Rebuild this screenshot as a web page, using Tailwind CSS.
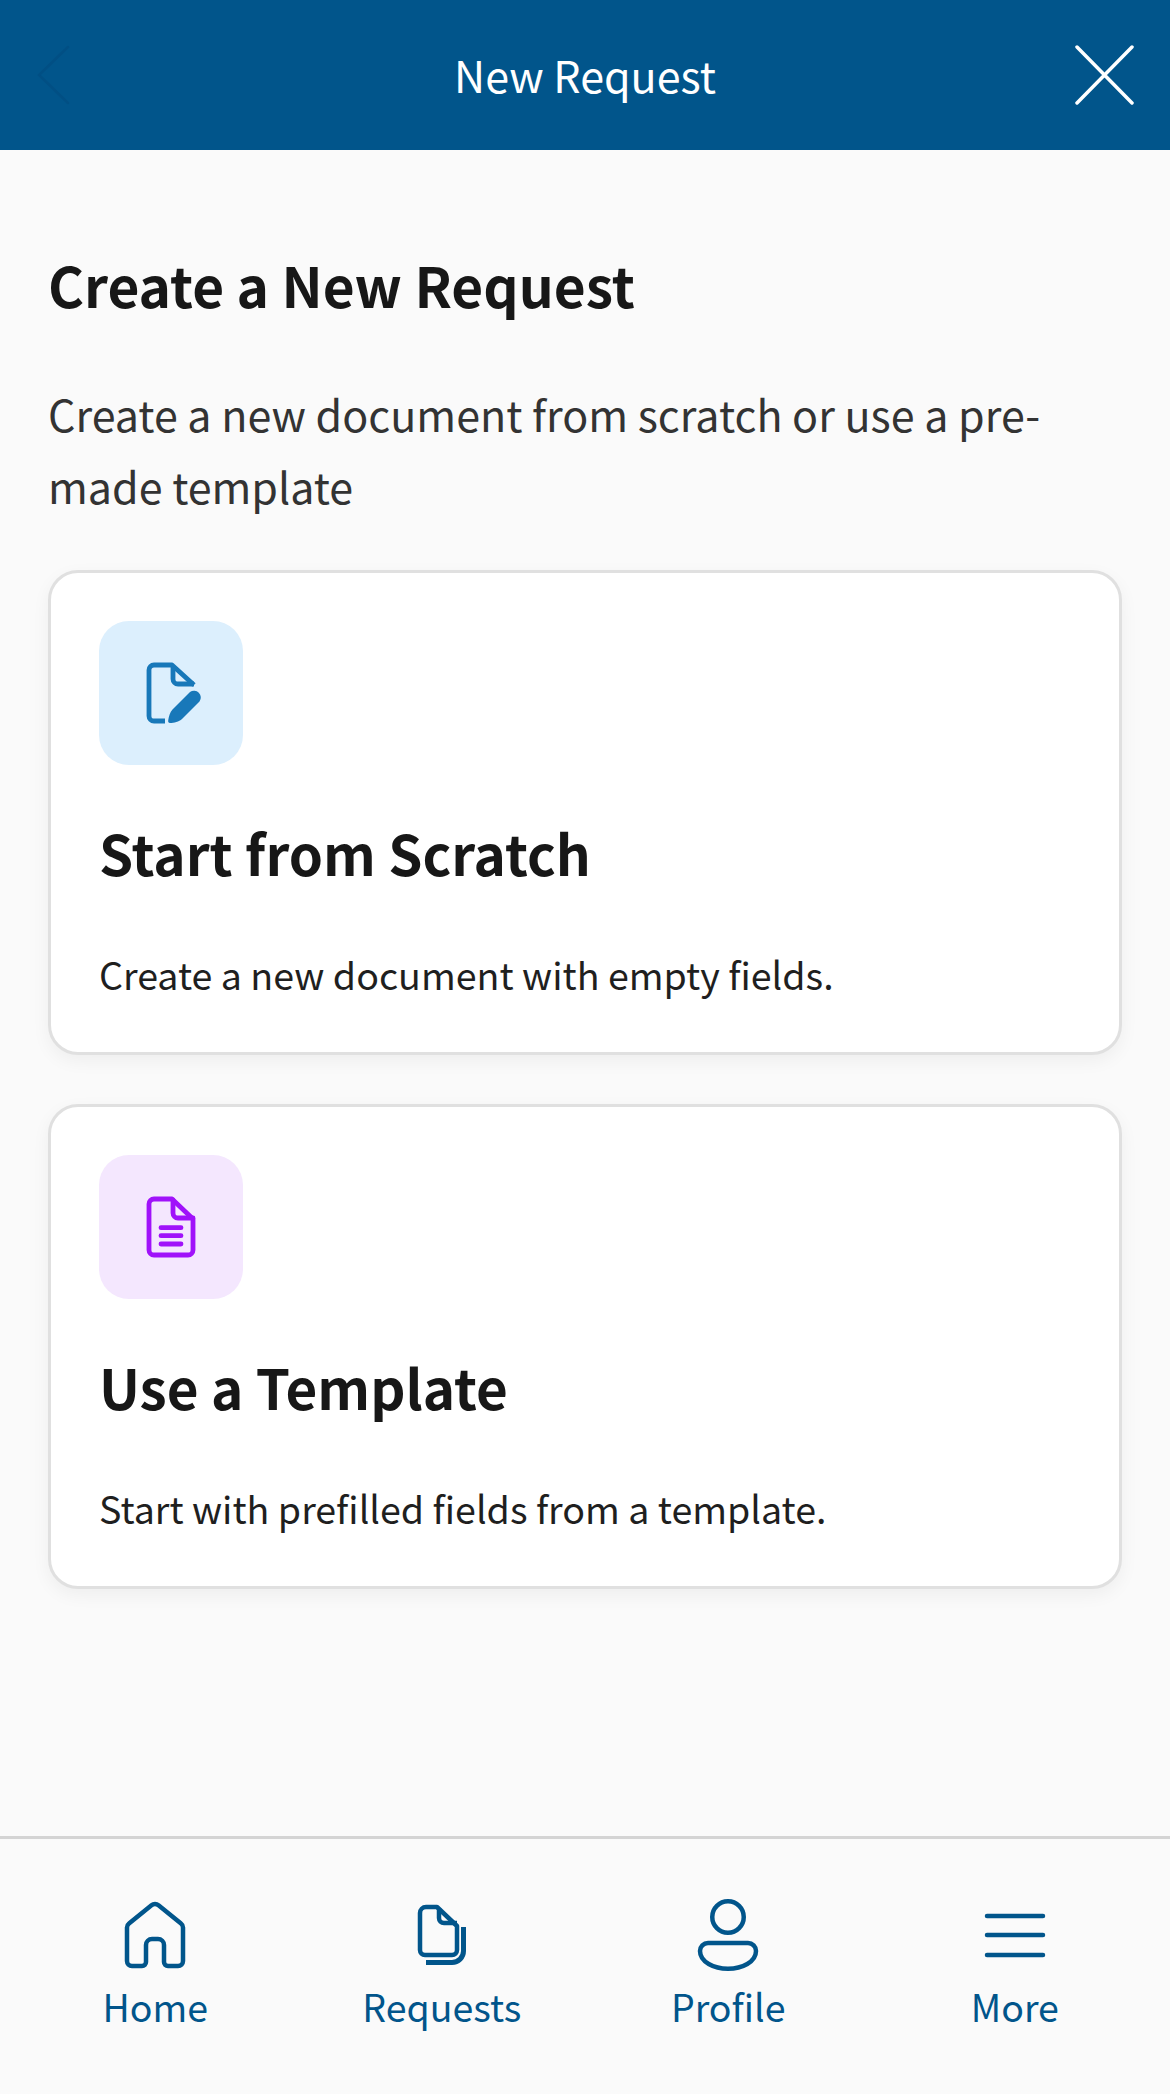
<!DOCTYPE html>
<html lang="en">
<head>
    <meta charset="UTF-8">
    <meta name="viewport" content="width=device-width, initial-scale=1.0">
    <title>New Request</title>
    <script src="https://cdn.jsdelivr.net/npm/@tailwindcss/browser@4"></script>
</head>
<body class="bg-[#fafafa] font-['Noto_Sans_CJK_SC','Noto_Sans',sans-serif]">
    <div class="w-[1170px] h-[2094px] flex flex-col overflow-hidden">
        <!-- header -->
        <header class="h-[150px] bg-[#01558b] flex items-center justify-between px-[36px] shrink-0">
            <svg class="w-[59px] h-[60px]" viewBox="0 0 59 60" fill="none" stroke="#014f84" stroke-width="2.5" stroke-linecap="round"><path d="M32 2 3 30l29 28"/></svg>
            <span class="text-white text-[43px] leading-[60px] mb-[2px]">New Request</span>
            <svg class="w-[59px] h-[60px]" viewBox="0 0 59 60" fill="none" stroke="#fff" stroke-width="3.5" stroke-linecap="round"><path d="M2 2l55 56M57 2 2 58"/></svg>
        </header>

        <main class="flex-1 px-[48px] pt-[98px]">
            <h1 class="text-[55px] leading-[72px] font-semibold text-[#171717]">Create a New Request</h1>
            <p class="mt-[57px] text-[43px] leading-[72px] text-[#333333]">Create a new document from scratch or use a pre-<br>made template</p>

            <div class="mt-[49px] flex flex-col gap-[49px]">
                <div class="h-[485px] bg-white border-[3px] border-[#e0e0e0] rounded-[30px] shadow-[0_6px_18px_rgba(0,0,0,0.05)] px-[48px] pt-[48px]">
                    <div class="w-[144px] h-[144px] rounded-[30px] bg-[#dceffd] flex items-center justify-center">
                        <svg class="w-[72px] h-[72px]" viewBox="0 0 72 72" fill="none" stroke="#1878b9" stroke-width="4.8" stroke-linejoin="round"><path d="M30 64H19a5 5 0 0 1-5-5V13a5 5 0 0 1 5-5H37L59 28"/><path d="M38 9V22a5 5 0 0 0 5 5H59"/><path d="M35 66C33.5 66 33 65 33.2 63.5C33.8 59.5 35 55 37.5 52.5L55 35A6.8 6.8 0 0 1 64.5 44.5L47 62C44 65 39 65.8 35 66z" fill="#1878b9" stroke="none"/></svg>
                    </div>
                    <h2 class="mt-[48px] text-[54.8px] leading-[78px] font-semibold text-[#171717]">Start from Scratch</h2>
                    <p class="mt-[56px] text-[37.6px] leading-[54px] text-[#1f1f1f]">Create a new document with empty fields.</p>
                </div>
                <div class="h-[485px] bg-white border-[3px] border-[#e0e0e0] rounded-[30px] shadow-[0_6px_18px_rgba(0,0,0,0.05)] px-[48px] pt-[48px]">
                    <div class="w-[144px] h-[144px] rounded-[30px] bg-[#f4e7fe] flex items-center justify-center">
                        <svg class="w-[72px] h-[72px]" viewBox="0 0 72 72" fill="none" stroke="#a012fa" stroke-width="4.8" stroke-linejoin="round" stroke-linecap="round"><path d="M19 8H37L58 28V59a5 5 0 0 1-5 5H19a5 5 0 0 1-5-5V13a5 5 0 0 1 5-5z"/><path d="M38 9V22a5 5 0 0 0 5 5H58"/><path d="M26 36.7H46M26 44.7H46M26 53H46" stroke-width="4.8"/></svg>
                    </div>
                    <h2 class="mt-[48px] text-[54.8px] leading-[78px] font-semibold text-[#171717]">Use a Template</h2>
                    <p class="mt-[56px] text-[37.6px] leading-[54px] text-[#1f1f1f]">Start with prefilled fields from a template.</p>
                </div>
            </div>
        </main>

        <!-- bottom nav -->
        <nav class="h-[258px] shrink-0 border-t-[3px] border-[#d4d4d4] px-[12px] grid grid-cols-4 text-[#01558b] text-[37.5px] leading-[54px]">
            <div class="flex flex-col items-center pt-[60px]">
                <svg class="w-[72px] h-[72px]" viewBox="0 0 72 72" fill="none" stroke="#01558b" stroke-width="4.5" stroke-linejoin="round"><path d="M32.5 6.3L10 24.5a5 5 0 0 0-2 4V62a5 5 0 0 0 5 5H23a4 4 0 0 0 4-4V46a6 6 0 0 1 6-6h6a6 6 0 0 1 6 6V63a4 4 0 0 0 4 4H59a5 5 0 0 0 5-5V28.5a5 5 0 0 0-2-4L39.5 6.3a5.5 5.5 0 0 0-7 0z"/></svg>
                <span class="mt-[8px]">Home</span>
            </div>
            <div class="flex flex-col items-center pt-[60px]">
                <svg class="w-[72px] h-[72px]" viewBox="0 0 72 72" fill="none" stroke="#01558b" stroke-width="4.5" stroke-linejoin="round"><path d="M20 8H31L51 27V51a5 5 0 0 1-5 5H19a5 5 0 0 1-5-5V14a6 6 0 0 1 6-6z"/><path d="M33 9V19a5 5 0 0 0 5 5H51"/><path d="M57.5 28V52a11.5 11.5 0 0 1-11.5 11.5H20" stroke-width="5"/></svg>
                <span class="mt-[8px]">Requests</span>
            </div>
            <div class="flex flex-col items-center pt-[60px]">
                <svg class="w-[72px] h-[72px]" viewBox="0 0 72 72" fill="none" stroke="#01558b" stroke-width="4.5"><circle cx="36" cy="18" r="15.75"/><path d="M16 44H56a8 8 0 0 1 8 8C64 63 50 69.7 36 69.7S8 63 8 52a8 8 0 0 1 8-8z"/></svg>
                <span class="mt-[8px]">Profile</span>
            </div>
            <div class="flex flex-col items-center pt-[60px]">
                <svg class="w-[72px] h-[72px]" viewBox="0 0 72 72" fill="none" stroke="#01558b" stroke-width="4.5" stroke-linecap="round"><path d="M8 17H64M8 36H64M8 56H64"/></svg>
                <span class="mt-[8px]">More</span>
            </div>
        </nav>
    </div>
</body>
</html>
